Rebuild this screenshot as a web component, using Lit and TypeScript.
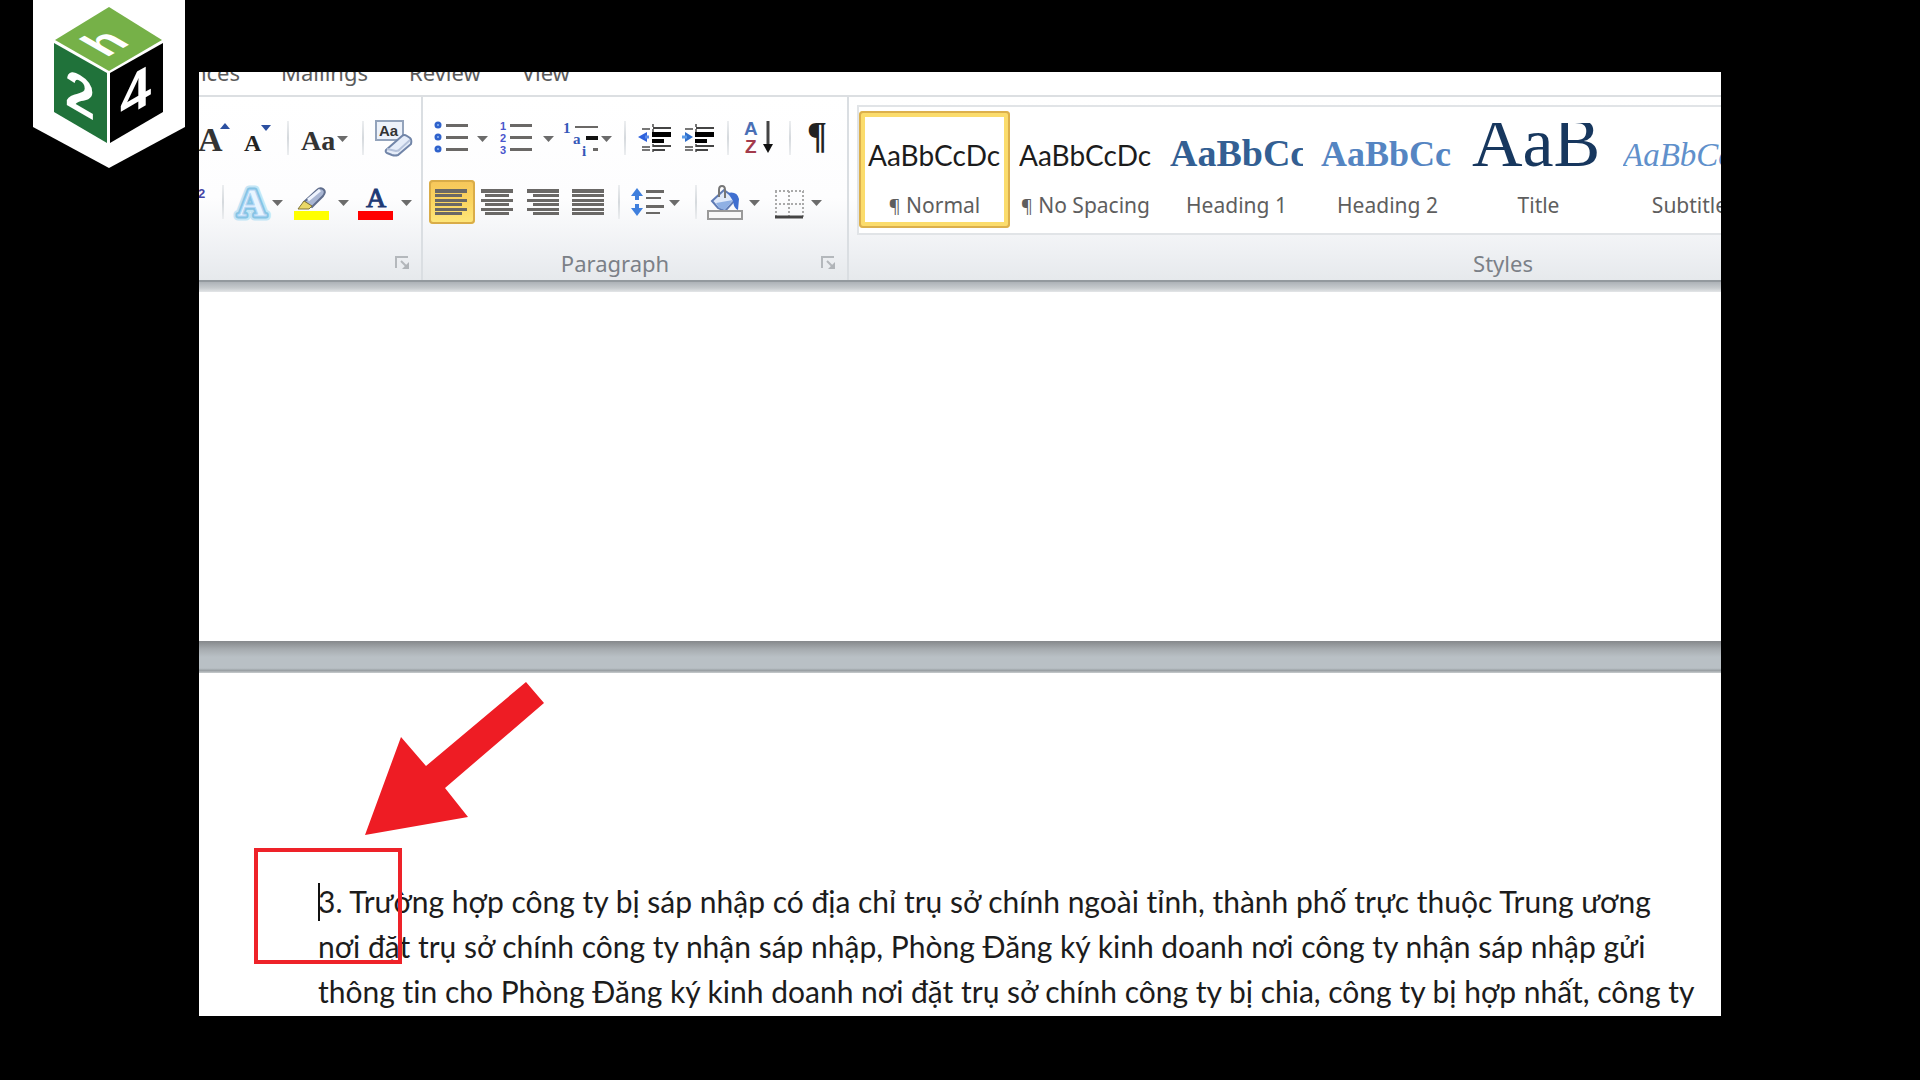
import { LitElement, html, svg, css, nothing } from "lit";
import { customElement, property } from "lit/decorators.js";

const arrow = (x: number) => svg`<path d="M${x} 22h11l-5.500 6z" fill="#6b6b6b"/>`;
const bars = (rows: number[][]) =>
  svg`${rows.map(([x1, x2, y, h = 3]) => svg`<rect x=${x1} y=${y - 1} width=${x2 - x1} height=${h} fill="#6a6866"/>`)}`;
const alignBars = (short: [number, number]) =>
  bars([12, 17, 22, 26, 31, 35].map((y, i) => (i % 2 ? [short[0], short[1], y, 3] : [6, 38, y, i ? 3 : 4])));

const indentBody = svg`
  <path d="M9 15h8M9 33h8M9 36h8" stroke="#777" stroke-width="2"/>
  <path d="M20 10v30" stroke="#777" stroke-width="2" stroke-dasharray="3 2"/>
  <path d="M20 14h18M20 32h18M20 36h12" stroke="#444" stroke-width="2"/>
  <path d="M19 20.500h19" stroke="#000" stroke-width="5"/>
  <path d="M19 27h12" stroke="#000" stroke-width="4"/>`;

interface Tool {
  w: number;
  label?: string;
  art?: unknown;
  on?: boolean;
}
const SEP: Tool = { w: 16 };

const fontTop: Tool[] = [
  { w: 37, label: "Grow Font", art: svg`<text class="serif" x="-1" y="37" font-size="34" fill="#333">A</text><path d="M21 15h10l-5-6z" fill="#2b4fa0"/>` },
  { w: 44, label: "Shrink Font", art: svg`<text class="serif" x="8" y="37" font-size="24" fill="#222">A</text><path d="M25 11h10l-5 6z" fill="#2b4fa0"/>` },
  SEP,
  { w: 59, label: "Change Case", art: svg`<text class="serif" x="5" y="36" font-size="28" fill="#333">Aa</text>${arrow(41)}` },
  SEP,
  {
    w: 48,
    label: "Clear Formatting",
    art: svg`<rect x="5" y="7" width="27" height="19" fill="#edf2fa" stroke="#93a3bb" stroke-width="2"/>
      <text x="8" y="22" font-size="15" font-weight="bold" fill="#333">Aa</text>
      <path d="M15 36 31 22q2-2 5 0l3 2q2 2 1 6L27 41q-3 1-6 0l-5-2q-2-1-1-3z" fill="#e6edf9" stroke="#7185a8" stroke-width="2"/>
      <path d="M16 35l9 2q3 0 4-2l10-9" fill="none" stroke="#b5c2da" stroke-width="2"/>`,
  },
];
const fontBottom: Tool[] = [
  { w: 16, label: "Superscript", art: svg`<text x="-1" y="20" font-size="13" font-weight="bold" fill="#4545a5">2</text>` },
  SEP,
  {
    w: 57,
    label: "Text Effects",
    art: svg`<g class="serif" font-size="40" text-anchor="middle" stroke-linejoin="round">
        <text x="21" y="38" fill="none" stroke="#c4e6f6" stroke-width="9">A</text>
        <text x="21" y="38" fill="none" stroke="#86c4e4" stroke-width="5">A</text>
        <text x="21" y="38" fill="#e9f5ff" stroke="#b5d6f5" stroke-width="1">A</text></g>${arrow(41)}`,
  },
  {
    w: 64,
    label: "Text Highlight Color",
    art: svg`<path d="M16 24 29 12q3-3 6-1l1 1q2 2-1 6L24 29z" fill="#a9b6d3" stroke="#5f6d8c" stroke-width="2"/>
      <path d="M20 22 32 12" stroke="#eef3fd" stroke-width="3"/>
      <path d="M10 31l6-8 8 5-3 3z" fill="#ead867" stroke="#817536"/>
      <rect x="6" y="33" width="35" height="9" fill="#ff0"/>${arrow(50)}`,
  },
  { w: 63, label: "Font Color", art: svg`<text class="serif plain" x="14" y="29" font-size="28" fill="#1f3a75" stroke="#1f3a75">A</text><rect x="6" y="33" width="35" height="9" fill="#f00"/>${arrow(49)}` },
];

const dots = [11, 23, 35];
const paraTop: Tool[] = [
  {
    w: 72,
    label: "Bullets",
    art: svg`${dots.map((y) => svg`<circle cx="15" cy=${y} r="3.500" fill="#2f62cc"/><circle cx="15" cy=${y} r="1" fill="#8fb8f2"/>`)}
      ${bars(dots.map((y) => [23, 45, y]))}${arrow(54)}`,
  },
  {
    w: 65,
    label: "Numbering",
    art: svg`${dots.map((y, i) => svg`<text x="5" y=${y + 5} font-size="11" font-weight="bold" fill="#4a55cc">${i + 1}</text>`)}
      ${bars(dots.map((y) => [15, 37, y]))}${arrow(48)}`,
  },
  {
    w: 57,
    label: "Multilevel List",
    art: svg`<g class="serif" font-size="15" fill="#3558b8"><text x="3" y="19">1</text><text x="13" y="30">a</text><text x="22" y="42">i</text></g>
      ${bars([[15, 38, 13, 2], [33, 38, 35]])}<rect x="26" y="22" width="12" height="4" fill="#111"/>${arrow(41)}`,
  },
  SEP,
  { w: 43, label: "Decrease Indent", art: svg`${indentBody}<path d="M5 23l9-5v10z" fill="#2f62dd"/><path d="M12 23h4" stroke="#5b8be8" stroke-width="3"/>` },
  { w: 44, label: "Increase Indent", art: svg`${indentBody}<path d="M17 23l-8-5v10z" fill="#2f6fcc"/><path d="M6 23h5" stroke="#5b9be8" stroke-width="3"/>` },
  SEP,
  {
    w: 46,
    label: "Sort",
    art: svg`<g font-size="19" font-weight="bold"><text x="8" y="21" fill="#4a6fb5">A</text><text x="9" y="39" fill="#a33b4c">Z</text></g>
      <path d="M32 7v26" stroke="#444" stroke-width="3"/><path d="M27 30h10l-5 9z" fill="#111"/>`,
  },
  SEP,
  { w: 44, label: "Show Paragraph Marks", art: svg`<text class="serif" x="9" y="34" font-size="37" fill="#222">¶</text>` },
];
const paraBottom: Tool[] = [
  { w: 46, label: "Align Left", on: true, art: alignBars([6, 33]) },
  { w: 46, label: "Center", art: alignBars([10, 34]) },
  { w: 45, label: "Align Right", art: alignBars([12, 38]) },
  { w: 45, label: "Justify", art: alignBars([6, 38]) },
  SEP,
  {
    w: 61,
    label: "Line Spacing",
    art: svg`<path d="M10 10l6 8h-4v4H8v-4H4zM10 38l6-8h-4v-4H8v4H4z" fill="#3f7fdd"/>
      ${bars([[19, 37, 13], [19, 34, 20, 2], [19, 37, 28], [19, 33, 35, 2]])}${arrow(42)}`,
  },
  SEP,
  {
    w: 61,
    label: "Shading",
    art: svg`<path d="M8 23 20 12l12 9-11 12-7-3z" fill="#dfe9fa" stroke="#5f7bb5" stroke-width="2"/>
      <path d="M12 25l17-3-8 10-6-2z" fill="#8fb0e4"/>
      <path d="M15 19v-7q0-4 3-4t3 4v8" fill="none" stroke="#777" stroke-width="2"/>
      <path d="M24 15q9-2 11 6l-1 11q-4-1-5-9z" fill="#3f6fd0"/>
      <rect x="4" y="33" width="34" height="8" fill="#f8f8f8" stroke="#999" stroke-width="2"/>${arrow(45)}`,
  },
  {
    w: 63,
    label: "Borders",
    art: svg`<path d="M10 13h29M10 26h29M11 13v26M24 13v26M38 13v26" stroke="#aaa" stroke-width="2" stroke-dasharray="2 2"/>
      <path d="M10 39h28" stroke="#444" stroke-width="3"/>${arrow(46)}`,
  },
];

const gallery = [
  { name: "Normal", mark: true, kind: "body", sample: "AaBbCcDc", on: true },
  { name: "No Spacing", mark: true, kind: "body", sample: "AaBbCcDc" },
  { name: "Heading 1", kind: "h1", sample: "AaBbCc" },
  { name: "Heading 2", kind: "h2", sample: "AaBbCc" },
  { name: "Title", kind: "title", sample: "AaB" },
  { name: "Subtitle", kind: "subtitle", sample: "AaBbCc" },
];

const paragraph = [
  "3. Trường hợp công ty bị sáp nhập có địa chỉ trụ sở chính ngoài tỉnh, thành phố trực thuộc Trung ương",
  "nơi đặt trụ sở chính công ty nhận sáp nhập, Phòng Đăng ký kinh doanh nơi công ty nhận sáp nhập gửi",
  "thông tin cho Phòng Đăng ký kinh doanh nơi đặt trụ sở chính công ty bị chia, công ty bị hợp nhất, công ty",
];

@customElement("tool-row")
class ToolRow extends LitElement {
  @property({ attribute: false }) tools: Tool[] = [];
  static styles = css`
    :host { display: flex; height: 48px; align-items: center; }
    button { all: unset; display: block; box-sizing: border-box; height: 48px; }
    .on { height: 44px; border-radius: 4px; background: linear-gradient(#f6c65a, #fbd560 50%, #fee77c); box-shadow: inset 0 0 0 2px #d9ac48; }
    svg { display: block; height: 100%; overflow: visible; font-family: "Liberation Sans", Arial, sans-serif; }
    .serif { font-family: "Liberation Serif", serif; font-weight: bold; }
    .plain { font-weight: normal; }
    .sep { width: 16px; height: 34px; background: linear-gradient(#eceef0, #d5d9dd, #eceef0) center / 2px 100% no-repeat; }
  `;
  render() {
    return this.tools.map((t) =>
      t.label
        ? html`<button class=${t.on ? "on" : ""} aria-label=${t.label} aria-pressed=${t.on ? "true" : nothing}>
            <svg width=${t.w} viewBox=${t.on ? `0 2 ${t.w} 44` : `0 0 ${t.w} 48`} aria-hidden="true">${t.art}</svg>
          </button>`
        : html`<span class="sep"></span>`
    );
  }
}

@customElement("app-root")
class AppRoot extends LitElement {
  static styles = css`
    :host {
      display: flex; box-sizing: border-box; height: 100vh; padding: 72px 199px 64px; position: relative;
      background: #000; font-family: "Noto Sans", "Open Sans", sans-serif; overflow: hidden;
    }
    .logo { position: absolute; left: 33px; top: 0; }
    .logo text { font-family: "Liberation Sans", Arial, sans-serif; font-weight: bold; fill: #fff; }
    .frame { flex: 1; min-width: 0; display: flex; flex-direction: column; overflow: hidden; background: #fff; }
    button { all: unset; box-sizing: border-box; }

    .tabs { display: flex; gap: 41px; height: 23px; overflow: hidden; align-items: flex-end; border-bottom: 2px solid #dcdfe2; font-size: 22px; line-height: 30px; color: #5b5b5b; }
    .tabs button { padding-bottom: 8px; white-space: nowrap; }
    .tabs .cut { display: flex; justify-content: flex-end; width: 41px; overflow: hidden; }

    .ribbon { display: flex; height: 183px; background: linear-gradient(#fff, #fdfdfe 55%, #eef0f3 85%, #e6e9ec); border-bottom: 2px solid #93999e; }
    .group { display: flex; flex-direction: column; flex: none; box-sizing: border-box; border-right: 2px solid #dadee2; padding-top: 17px; }
    .font { width: 224px; }
    .para { width: 426px; }
    .tools { display: flex; flex-direction: column; gap: 16px; }
    .inset { padding-left: 6px; }
    .caption { display: grid; grid-template: 30px / 1fr 40px; align-items: center; font-size: 22px; line-height: 30px; color: #7b8087; padding-top: 22px; }
    .caption span { text-align: center; }
    .caption button { grid-column: 2; padding-left: 14px; }
    .caption svg { display: block; }
    .styles { width: 1340px; padding: 8px 0 0 8px; border-right: 0; }
    .styles .caption { padding-top: 13px; }
    .gallery { display: flex; box-sizing: border-box; height: 130px; padding-top: 4px; background: #fff; border: 2px solid #e1e4e7; border-right: 0; }
    .style { width: 151px; height: 117px; padding: 4px 9px 0; border-radius: 4px; flex: none; }
    .style.on { box-shadow: inset 0 0 0 2px #dcb04c, inset 0 0 0 6px #fbdc6c; }
    .sample { display: block; height: 64px; overflow: hidden; white-space: nowrap; font: 70px/40px "Liberation Serif", serif; }
    .sample span { line-height: 1px; }
    .sample .body { font: 28px/1px Lato, Carlito, sans-serif; color: #1c1c1c; }
    .h1 { font-size: 38px; font-weight: bold; color: #335f93; }
    .h2 { font-size: 36px; font-weight: bold; color: #5585c2; }
    .title { font-size: 70px; color: #17375e; }
    .subtitle { font-size: 33px; font-style: italic; color: #6090cb; }
    .name { display: block; text-align: center; font-size: 21px; line-height: 30px; color: #5e5e5e; white-space: nowrap; padding-top: 3px; }
    .mark { font-size: 18px; }

    .shade { height: 10px; background: linear-gradient(#adb2b7, #c6cacd 60%, #e4e6e8); }
    .page { background: #fff; }
    .first { flex: 1; }
    .gap { height: 32px; background: linear-gradient(#85888b, #a6abaf 25%, #b9c0c5 50%, #b9c0c5 85%, #999fa3 92%, #c8ccce); }
    .second { position: relative; height: 343px; }
    .text { margin: 0; padding: 206px 0 0 119px; font: 30px/45px Lato, Carlito, "Noto Sans", sans-serif; font-variant-ligatures: none; color: #1c1c1c; white-space: nowrap; }
    .text span { display: block; }
    .caret { position: absolute; left: 119px; top: 210px; width: 2px; height: 38px; background: #111; }
    .box { position: absolute; left: 55px; top: 175px; width: 148px; height: 116px; box-sizing: border-box; border: 4px solid #ee2229; }
    .pointer { position: absolute; left: 165px; top: 8px; }
  `;

  private caption(text: string, launcher = true) {
    return html`<div class="caption"><span>${text}</span>
      ${launcher
        ? html`<button aria-label="Open dialog"><svg width="16" height="16" viewBox="0 0 16 16" aria-hidden="true">
            <path d="M1 13V2h12M6 6l6 6" fill="none" stroke="#b4b8bc" stroke-width="2"/><path d="M14 7v7H7z" fill="#b0b4b8"/></svg></button>`
        : nothing}
    </div>`;
  }

  render() {
    return html`
      <main class="frame">
        <nav class="tabs">
          <button class="cut">References</button><button>Mailings</button><button>Review</button><button>View</button>
        </nav>
        <div class="ribbon">
          <section class="group font">
            <div class="tools"><tool-row .tools=${fontTop}></tool-row><tool-row .tools=${fontBottom}></tool-row></div>
            ${this.caption("")}
          </section>
          <section class="group para">
            <div class="tools"><tool-row .tools=${paraTop}></tool-row><tool-row class="inset" .tools=${paraBottom}></tool-row></div>
            ${this.caption("Paragraph")}
          </section>
          <section class="group styles">
            <div class="gallery">
              ${gallery.map(
                (s) => html`<button class="style ${s.on ? "on" : ""}">
                  <span class="sample"><span class=${s.kind}>${s.sample}</span></span>
                  <span class="name">${s.mark ? html`<span class="mark">¶</span> ` : nothing}${s.name}</span>
                </button>`
              )}
            </div>
            ${this.caption("Styles", false)}
          </section>
        </div>
        <div class="shade"></div>
        <div class="page first"></div>
        <div class="gap"></div>
        <article class="page second">
          <p class="text">${paragraph.map((l) => html`<span>${l}</span>`)}</p>
          <i class="caret"></i>
          <div class="box"></div>
          <svg class="pointer" width="182" height="156" viewBox="0 0 182 156" aria-hidden="true">
            <path d="M1 154 37 56 62 85 162 1 180 22 81 107 104 136z" fill="#ee1c24"/>
          </svg>
        </article>
      </main>
      <svg class="logo" width="152" height="169" viewBox="33 0 152 169" role="img" aria-label="24h">
        <path d="M33 0h152v127l-76 41-76-41z" fill="#fff"/>
        <path d="M109 7 162 40 109 71 55 40z" fill="#76b148"/>
        <path d="M54 43l53 30v70l-53-31z" fill="#20723a"/>
        <path d="M110 73l53-30v69l-53 31z" fill="#000"/>
        <text font-size="54" transform="matrix(1 .577 0 1 65 104)">2</text>
        <text font-size="56" transform="matrix(1 -.577 0 1 120 120)">4</text>
        <text font-size="48" transform="matrix(.866 -.5 .866 .5 106 58)">h</text>
      </svg>
    `;
  }
}
